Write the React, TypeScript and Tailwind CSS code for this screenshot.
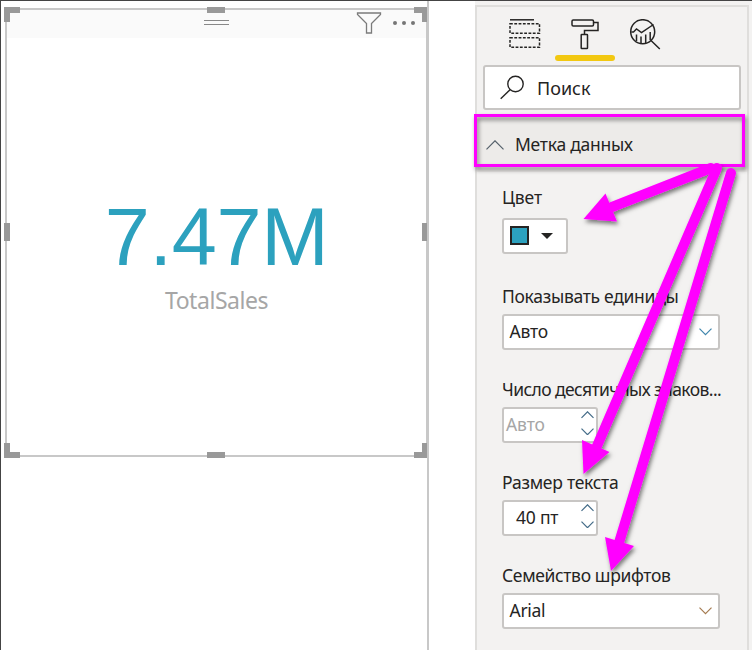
import React from "react";

const SANS = "font-['Noto_Sans','Open_Sans',sans-serif]";

function Chevron({ up = false, w = 13, color = "#3d6f92" }: { up?: boolean; w?: number; color?: string }) {
  const h = w / 2;
  return (
    <svg width={w} height={h + 1} viewBox={`0 0 ${w} ${h + 1}`} fill="none" stroke={color} strokeWidth="1.2" className="block shrink-0">
      <path d={up ? `M.5 ${h + 0.4} L${w / 2} .8 L${w - 0.5} ${h + 0.4}` : `M.5 .6 L${w / 2} ${h + 0.2} L${w - 0.5} .6`} />
    </svg>
  );
}

function Label({ text, className }: { text: string; className: string }) {
  return (
    <div className="flex h-6 items-center whitespace-nowrap pb-[2px]">
      <span className={className}>{text}</span>
    </div>
  );
}

function Select({ value, color, className }: { value: string; color: string; className: string }) {
  return (
    <div className="flex h-9 w-[218px] items-center justify-between rounded-[3px] border-2 border-[#c8c6c4] bg-white pl-[5.5px] pr-[6px]">
      <span className={className}>{value}</span>
      <Chevron color={color} />
    </div>
  );
}

function Stepper({ value, className }: { value: string; className: string }) {
  return (
    <div className="flex h-9 w-24 items-center justify-between rounded-[3px] border-2 border-[#c8c6c4] bg-white pr-[2px]">
      <span className={className}>{value}</span>
      <div className="flex flex-col gap-[9px] pb-[4px]">
        <Chevron up color="#446c88" />
        <Chevron color="#446c88" />
      </div>
    </div>
  );
}

function Card() {
  const handle = "absolute bg-[#999]";
  return (
    <div className="relative ml-1 mt-[7px] flex h-[449px] w-[423px] flex-col border-2 border-[#c8c8c8]">
      <div className="relative flex h-[28px] items-start justify-end bg-[#fafafa]">
        <div className="absolute left-[197px] top-[10px] h-[5px] w-[25px] border-y border-[#888]" />
        <svg width="26" height="24" viewBox="0 0 26 24" fill="none" stroke="#7b7b7b" strokeWidth="1.3" className="mr-[10px] mt-[1px]">
          <path d="M1.500 2H24.500V3.500L15.500 12.500V22H10.500V12.500L1.500 3.500Z" />
        </svg>
        <svg width="24" height="6" viewBox="0 0 24 6" fill="#757575" className="mr-[10px] mt-[10px]">
          <circle cx="3" cy="3" r="2" />
          <circle cx="12" cy="3" r="2" />
          <circle cx="21" cy="3" r="2" />
        </svg>
      </div>
      <div className="flex flex-col items-center pt-[159px]">
        <span className="font-['Liberation_Sans',Arial,sans-serif] text-[81px] leading-[80px] tracking-[-0.3px] text-[#2ca1be]">7.47M</span>
        <span className={`${SANS} mt-[6px] text-[23px] leading-[34px] tracking-[-0.45px] text-[#a6a6a6]`}>TotalSales</span>
      </div>
      <i className={`${handle} -left-[3px] -top-[3px] h-[6px] w-[16px]`} />
      <i className={`${handle} -left-[3px] -top-[3px] h-[15px] w-[6px]`} />
      <i className={`${handle} left-[200px] -top-[3px] h-[6px] w-[18px]`} />
      <i className={`${handle} -right-px -top-[3px] h-[6px] w-[13px]`} />
      <i className={`${handle} -right-px -top-[3px] h-[15px] w-[5px]`} />
      <i className={`${handle} -left-[3px] top-[213px] h-[18px] w-[6px]`} />
      <i className={`${handle} -right-px top-[213px] h-[18px] w-[5px]`} />
      <i className={`${handle} -bottom-[3px] -left-[3px] h-[6px] w-[16px]`} />
      <i className={`${handle} -bottom-[3px] -left-[3px] h-[15px] w-[6px]`} />
      <i className={`${handle} -bottom-[3px] left-[200px] h-[6px] w-[18px]`} />
      <i className={`${handle} -bottom-[3px] -right-px h-[6px] w-[13px]`} />
      <i className={`${handle} -bottom-[3px] -right-px h-[15px] w-[5px]`} />
    </div>
  );
}

function PanelTabs() {
  return (
    <div className="flex h-[58px] items-start pl-[18px] pt-[8px] text-[#252423]">
      <div className="flex w-[60px] justify-center pt-[4px]">
        <svg width="32" height="30" viewBox="0 0 32 30" fill="none" stroke="currentColor" strokeWidth="1.5">
          <path d="M1 .8H25" />
          <path d="M1 4.700H30.500V14.300H1Z M1 18.700H30.500V28.300H1Z" strokeDasharray="2.8 1.5" />
        </svg>
      </div>
      <div className="flex w-[60px] flex-col items-center pt-[4px]">
        <svg width="28" height="31" viewBox="0 0 28 31" fill="none" stroke="currentColor" strokeWidth="1.5">
          <rect x="1" y="1" width="21.500" height="6" rx="1.200" />
          <path d="M22.500 3.500H27V11.500H13.500V15.500" />
          <rect x="10.200" y="15.500" width="6.300" height="14" rx=".6" />
        </svg>
        <div className="mt-[5px] h-[6px] w-[60px] rounded-full bg-[#f2c811]" />
      </div>
      <div className="flex w-[60px] justify-center pt-[4px]">
        <svg width="32" height="32" viewBox="0 0 32 32" fill="none" stroke="currentColor" strokeWidth="1.500">
          <circle cx="13.700" cy="12.700" r="12" />
          <path d="M22 21.500L30.800 30M2.300 13L4.500 13L7.500 10L12.500 13.500L24.500 5.500M7.500 15.500V22M12 17.500V24.500M16.700 15.500V24.500M21.200 13V21" />
        </svg>
      </div>
    </div>
  );
}

function FormatPanel() {
  return (
    <div className={`${SANS} mt-1 w-[274px] border-x-2 border-t-2 border-[#dfdedc] text-[#252423]`}>
      <PanelTabs />
      <div className="ml-[6px] flex h-[45px] w-[258px] items-center rounded-[3px] border-2 border-[#c8c6c4] bg-white pl-[15px]">
        <svg width="24" height="25" viewBox="0 0 24 25" fill="none" stroke="#252423" strokeWidth="1.4">
          <circle cx="15.500" cy="9" r="7.700" />
          <path d="M10 14.800L.7 23.700" />
        </svg>
        <span className="ml-[13px] pt-px text-[18px] tracking-[0px]">Поиск</span>
      </div>
      <div className="mt-[5px] flex h-[57px] items-center bg-[#edebe9] pl-[9px] pt-[2px]">
        <Chevron up w={18} color="#54606a" />
        <span className="ml-[11px] text-[17.5px] tracking-[-0.25px]">Метка данных</span>
      </div>
      <div className="flex flex-col pl-[25px] pt-[14px]">
        <Label text="Цвет" className="text-[17.5px] tracking-[-0.1px]" />
        <div className="mt-[8px] flex h-9 w-[66px] items-center rounded-[3px] border-2 border-[#c8c6c4] bg-white pl-[6px]">
          <div className="mb-px h-[19px] w-[19px] border-2 border-[#252423] bg-[#2ca1be]" />
          <svg width="12" height="6" viewBox="0 0 12 6" className="ml-[12px]">
            <path d="M0 0H12L6 6Z" fill="#252423" />
          </svg>
        </div>
        <div className="mt-[31px] flex flex-col gap-[5px]">
          <Label text="Показывать единицы" className="text-[17.5px] tracking-[-0.3px]" />
          <Select value="Авто" color="#3f86ad" className="pb-px text-[17.5px] tracking-[-0.2px]" />
        </div>
        <div className="mt-[28px] flex flex-col gap-[5px]">
          <Label text="Число десятичных знаков..." className="text-[17.5px] tracking-[-0.59px]" />
          <Stepper value="Авто" className="ml-[2px] pb-px text-[17.5px] tracking-[-0.1px] text-[#a6a6a6]" />
        </div>
        <div className="mt-[28px] flex flex-col gap-[5px]">
          <Label text="Размер текста" className="text-[17.5px] tracking-[-0.25px]" />
          <Stepper value="40 пт" className="ml-[12px] pb-px text-[17.5px] tracking-[-0.2px]" />
        </div>
        <div className="mt-[28px] flex flex-col gap-[5px]">
          <Label text="Семейство шрифтов" className="text-[17.5px] tracking-[-0.35px]" />
          <Select value="Arial" color="#a57b50" className="pb-px text-[17.5px] tracking-[-0.3px]" />
        </div>
      </div>
    </div>
  );
}

function Annotations() {
  return (
    <svg className="pointer-events-none absolute left-0 top-0 h-[650px] w-[752px]" viewBox="0 0 752 650">
      <defs>
        <filter id="shadow" x="-20%" y="-20%" width="140%" height="140%">
          <feDropShadow dx="1.5" dy="3" stdDeviation="2" floodColor="#000" floodOpacity="0.5" />
        </filter>
      </defs>
      <rect x="475.500" y="115.500" width="268" height="50" fill="none" stroke="#f0f" strokeWidth="3" filter="url(#shadow)" />
      <g fill="#f0f" stroke="#f0f" strokeWidth="10" strokeLinecap="round" filter="url(#shadow)">
        <path d="M711 168L612 207" />
        <path d="M583.500 219L605.500 193.500L617 221.500Z" stroke="none" />
        <path d="M717 168L597 446" />
        <path d="M583.500 474L582 440L609.500 452Z" stroke="none" />
        <path d="M731 173L619.500 541" />
        <path d="M611 571L605 537L634 546Z" stroke="none" />
      </g>
    </svg>
  );
}

export default function App() {
  return (
    <div className="relative flex h-[650px] w-[752px] overflow-hidden border-l border-t border-[#444] bg-white">
      <div className="w-[428px] shrink-0 border-r-2 border-[#c8c8c8]">
        <Card />
      </div>
      <div className="w-[46px] shrink-0" />
      <div className="flex grow bg-[#f3f2f1]">
        <FormatPanel />
      </div>
      <div className="absolute -left-px -top-px">
        <Annotations />
      </div>
    </div>
  );
}
